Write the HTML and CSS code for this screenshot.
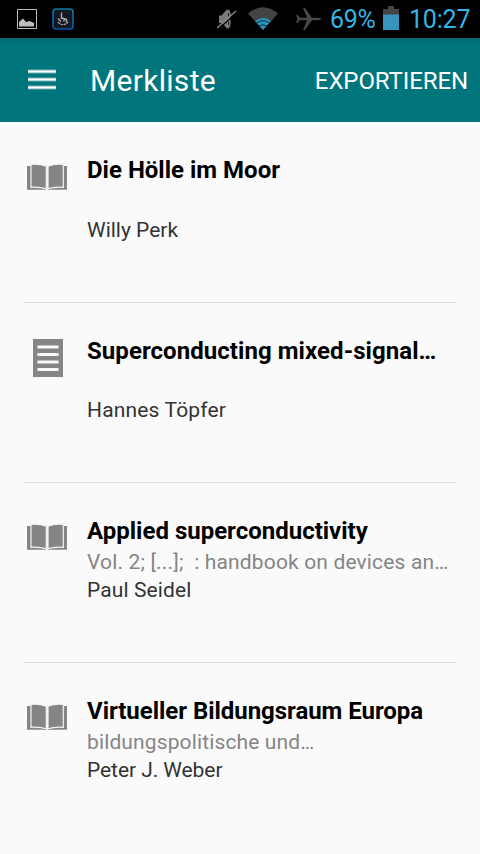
FILE: index.html
```html
<!DOCTYPE html>
<html lang="de">
<head>
<meta charset="utf-8">
<title>Merkliste</title>
<link rel="stylesheet" href="styles.css">
</head>
<body>
<svg class="defs" width="0" height="0" aria-hidden="true">
  <symbol id="book" viewBox="0 0 42 28">
    <path d="M1 3h19.500v23.700H1zM22 3h19v23.700H22z"/>
    <path class="leaf" d="M5 1.300Q13 .3 20.300 3.300V25.800Q13 23.500 5 24.300zM37.300 1.300Q29 .3 22 3.300V25.800Q29 23.500 37.300 24.300z"/>
  </symbol>
</svg>
<div class="status">
  <svg class="picture" width="20" height="20" viewBox="0 0 20 20"><path d="M.5.5h19v19H.5z" fill="none" stroke="#bdbdbd"/><path d="M2 17.500V13l4-3.500L9 13l3.500-1 4.500 2v3.500z" fill="#bdbdbd"/></svg>
  <svg class="touch" width="22" height="22" viewBox="0 0 22 22"><defs><linearGradient id="edge" x2="0" y2="1"><stop stop-color="#087b9b"/><stop offset="1" stop-color="#0756ac"/></linearGradient></defs><rect x="1" y="1" width="20" height="20" rx="3" fill="#151722" stroke="url(#edge)" stroke-width="1.700"/><path d="M9.500 4.500V11M9.500 10l5 1.200v3M6 10.500l3 3M12 11v2.500" fill="none" stroke="#aaa" stroke-width="1.400"/><path d="M6 14q5 5.500 10 0" fill="none" stroke="#aaa" stroke-width="1.200" stroke-dasharray="2.500 .7"/></svg>
  <svg class="mute" width="20" height="22" viewBox="0 0 20 22"><path d="M2 7.500h2.500L9 2.500q3-2.500 4.500 2v12q-1 5.500-4 3.500L5 15H2z" fill="#7c7c7c"/><path d="M11.500 5v3.500M11.500 14v3" stroke="#222"/><path d="M1 21.500 20 4.500" stroke="#000" stroke-width="1.300"/><path d="M0 20 19 3" stroke="#858585" stroke-width="1.500"/></svg>
  <svg class="wifi" width="30" height="23" viewBox="0 0 30 23"><path d="M0 6.500Q15-6 30 6.500L15 23z" fill="#444"/><path d="M7 14Q15 8 23 14L15 23z" fill="#2b93bd"/><path d="M8.500 16Q15 11.500 21.500 16M11 19Q15 16.500 19 19" fill="none" stroke="#071318" stroke-width=".8"/></svg>
  <svg class="plane" width="26" height="22" viewBox="0 0 26 22"><path d="M0 7h1.500L4 9.700H11L7 0h2l7 9.700h6q3 .3 4 1.300-1 1-4 1.300h-6L9 22H7l4-9.700H4L1.500 15H0l1.500-4z" fill="#464646"/></svg>
  <span class="percent">69%</span>
  <svg class="battery" width="16" height="24" viewBox="0 0 16 24"><path d="M0 3h5V0h6v3h5v6H0z" fill="#444"/><path d="M0 8.500h16V24H0z" fill="#3794bd"/></svg>
  <span class="clock">10:27</span>
</div>
<header class="bar">
  <svg class="menu" width="28" height="21" viewBox="0 0 28 21"><path d="M0 2.500h28M0 10.500h28M0 18.500h28" stroke="#fff" stroke-opacity=".45" stroke-width="4"/><path d="M0 2.500h28M0 10.500h28M0 18.500h28" stroke="#fff" stroke-width="2"/></svg>
  <h1>Merkliste</h1>
  <span class="export">EXPORTIEREN</span>
</header>
<main class="list">
  <article class="item">
    <svg class="icon" width="42" height="28"><use href="#book"/></svg>
    <div class="text"><h2>Die Hölle im Moor</h2><p class="sub"></p><p class="author">Willy Perk</p></div>
  </article>
  <article class="item">
    <svg class="icon page" width="30" height="38" viewBox="0 0 30 38"><path d="M0 0h30v38H0z"/><path d="M4.500 8h21M4.500 15.500h21M4.500 23h21M4.500 30.500h21" stroke="#fafafa" stroke-width="3"/></svg>
    <div class="text"><h2 class="t2">Superconducting mixed-signal…</h2><p class="sub"></p><p class="author a2">Hannes Töpfer</p></div>
  </article>
  <article class="item">
    <svg class="icon" width="42" height="28"><use href="#book"/></svg>
    <div class="text"><h2>Applied superconductivity</h2><p class="sub s3">Vol. 2; [...];&nbsp; : handbook on devices an…</p><p class="author a3">Paul Seidel</p></div>
  </article>
  <article class="item">
    <svg class="icon" width="42" height="28"><use href="#book"/></svg>
    <div class="text"><h2 class="t4">Virtueller Bildungsraum Europa</h2><p class="sub s4">bildungspolitische und…</p><p class="author a4">Peter J. Weber</p></div>
  </article>
</main>
</body>
</html>
```
FILE: styles.css
```css
* { box-sizing: border-box; }
body { margin: 0; width: 480px; height: 854px; overflow: hidden; background: #fafafa; font-family: Roboto, sans-serif; }
h1, h2, p { margin: 0; font-weight: 400; white-space: nowrap; }
svg { display: block; flex: none; }
.defs { position: absolute; }
.status { height: 38px; background: #000; display: flex; align-items: flex-start; color: #33b5e5; font-size: 25px; line-height: 30px; }
.picture { margin: 9px 0 0 17px; }
.touch { margin: 8px 0 0 15px; }
.mute { margin: 8px 0 0 143px; }
.wifi { margin: 7px 0 0 11px; }
.plane { margin: 8px 0 0 18px; }
.percent { margin: 5px 0 0 8px; width: 46px; white-space: nowrap; letter-spacing: -0.3px; }
.battery { margin: 6px 0 0 7px; }
.clock { margin: 5px 0 0 10px; white-space: nowrap; letter-spacing: -0.2px; }
.bar { height: 84px; background: linear-gradient(#006a70, #00757b 6px, #00757b); color: #fff; display: flex; align-items: center; padding: 0 12px 0 28px; }
.menu { margin: -2px 34px 0 0; }
h1 { font-size: 30px; line-height: 36px; letter-spacing: 0.3px; padding-top: 1px; }
.export { margin-left: auto; font-size: 24px; line-height: 30px; letter-spacing: -0.1px; padding-top: 1px; }
.list { padding: 1px 24px 0; }
.item { height: 180px; border-bottom: 1px solid #dedede; display: flex; padding-top: 31px; }
.item:last-child { border: 0; }
.icon { fill: #858585; margin: 9px 19px 0 2px; }
.leaf { stroke: #f4f4f4; stroke-width: 1.2px; }
.page { margin: 5px 24px 0 9px; }
h2 { font-size: 24px; line-height: 32px; font-weight: 700; color: #000; margin-bottom: 2px; }
.item + .item h2 { padding-top: 1px; margin-bottom: 1px; }
.sub { height: 28px; font-size: 21px; line-height: 28px; color: #858585; }
.author { font-size: 21px; line-height: 28px; color: #333; }
.t2 { letter-spacing: 0.06px; }
.t4 { letter-spacing: -0.04px; }
.s3 { letter-spacing: 0.15px; }
.s4 { letter-spacing: 0.13px; }
.a2 { letter-spacing: 0.16px; }
.a3 { letter-spacing: 0.1px; }
.a4 { letter-spacing: -0.07px; }
```
